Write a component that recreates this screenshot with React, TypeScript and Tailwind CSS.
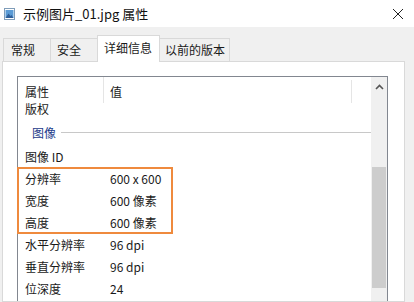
import React from 'react';

const font = { fontFamily: '"Noto Sans CJK SC", "Noto Sans", sans-serif' };

function Row({ label, value }: { label: string; value?: string }) {
  return (
    <div className="flex h-[22px] items-center pl-[7px] text-[12px] text-[#1a1a1a]">
      <span className="w-[85px] shrink-0">{label}</span>
      <span>{value}</span>
    </div>
  );
}

export default function App() {
  return (
    <div className="flex h-[302px] w-[414px] flex-col overflow-hidden bg-[#f0f0f0]" style={font}>
      {/* title bar */}
      <div className="flex h-[27px] shrink-0 items-center bg-white">
        <svg className="ml-[4px]" width="11" height="12" viewBox="0 0 11 12">
          <rect x="0.5" y="0.5" width="10" height="11" fill="#fff" stroke="#7f9db9" />
          <rect x="1.5" y="2" width="8" height="8" fill="#5b9bd5" />
          <path d="M1.5 10 L4.5 5.5 L6.5 8 L7.5 7 L9.5 10 Z" fill="#2e5f9a" />
        </svg>
        <span className="ml-[8px] text-[13px] text-[#111]">示例图片_01.jpg 属性</span>
        <svg className="ml-auto mr-[10px]" width="12" height="12" viewBox="0 0 12 12">
          <path d="M1 1 L11 11 M11 1 L1 11" stroke="#222" strokeWidth="1" />
        </svg>
      </div>

      {/* tabs */}
      <div className="mt-[8px] flex h-[26px] shrink-0 items-end pl-[3px] text-[12px] text-[#1a1a1a]">
        <div className="flex h-[23px] w-[47px] items-center border-l border-t border-[#d9d9d9] pl-[7px]">常规</div>
        <div className="flex h-[23px] w-[47px] items-center border-l border-t border-[#d9d9d9] pl-[6px]">安全</div>
        <div className="relative z-10 -mb-px flex h-[27px] w-[63px] items-center border-x border-t border-[#d9d9d9] bg-white pb-[2px] pl-[6px]">
          详细信息
        </div>
        <div className="flex h-[23px] w-[70px] items-center border-r border-t border-[#d9d9d9] pl-[5px]">以前的版本</div>
      </div>

      {/* panel */}
      <div className="ml-[2px] flex w-[403px] flex-1 border border-[#d9d9d9] bg-white pl-[14px] pr-[16px] pt-[14px]">
        <div className="relative flex flex-1 border-l border-r border-t border-[#828790]">
          <span className="absolute left-[85px] top-0 h-[26px] w-px bg-[#e5e5e5]" />
          <span className="absolute left-[333px] top-[3px] h-[23px] w-px bg-[#e5e5e5]" />

          <div className="flex flex-1 flex-col pt-[6px]">
            <div className="flex h-[17px] items-center pl-[7px] text-[12px] text-[#1a1a1a]">
              <span className="w-[85px]">属性</span>
              <span>值</span>
            </div>
            <div className="flex h-[17px] items-center pl-[7px] text-[12px] text-[#1a1a1a]">版权</div>
            <div className="flex h-[29px] items-center pl-[14px] pt-[2px] text-[12px] text-[#1c3a8a]">
              <span>图像</span>
              <span className="ml-[5px] mr-[-8px] h-px flex-1 bg-[#c8c8c8]" />
            </div>
            <Row label="图像 ID" />
            <div className="relative">
              <span className="absolute -left-px -top-px h-[67px] w-[156px] border-2 border-[#ef8a3d]" />
              <Row label="分辨率" value="600 x 600" />
              <Row label="宽度" value="600 像素" />
              <Row label="高度" value="600 像素" />
            </div>
            <Row label="水平分辨率" value="96 dpi" />
            <Row label="垂直分辨率" value="96 dpi" />
            <Row label="位深度" value="24" />
          </div>

          {/* scrollbar */}
          <div className="flex w-[16px] flex-col bg-[#f0f0f0]">
            <div className="flex h-[20px] items-center justify-center">
              <svg width="9" height="6" viewBox="0 0 9 6">
                <path d="M1 5 L4.5 1.5 L8 5" stroke="#555" strokeWidth="1.6" fill="none" />
              </svg>
            </div>
            <div className="mt-[70px] mx-px h-[121px] bg-[#cdcdcd]" />
          </div>
        </div>
      </div>
    </div>
  );
}
